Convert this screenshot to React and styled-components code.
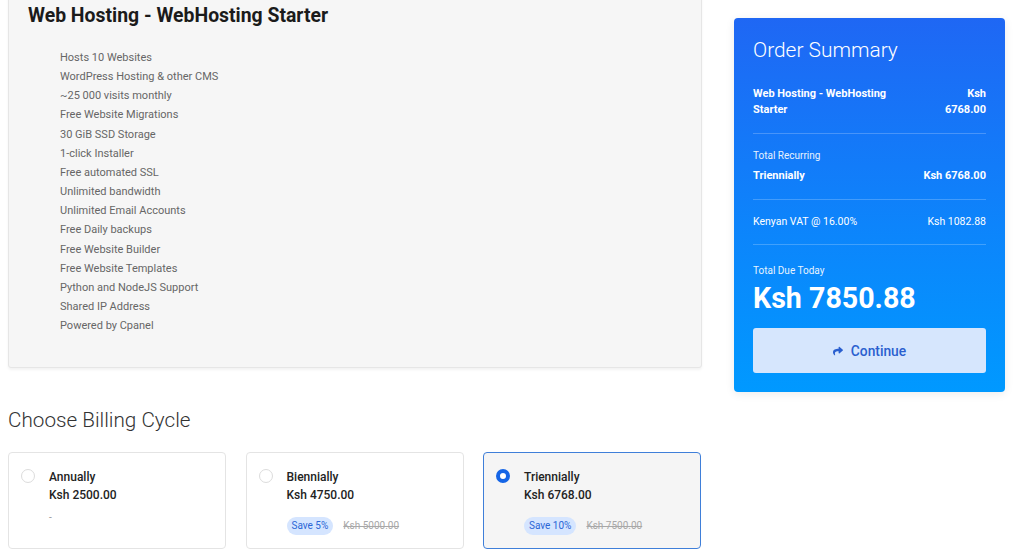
import React from 'react';
import styled, { createGlobalStyle } from 'styled-components';
import { FaShare } from 'react-icons/fa';

const GlobalStyle = createGlobalStyle`
  html, body {
    margin: 0;
    padding: 0;
    background: #ffffff;
    font-family: Roboto, "Liberation Sans", Arial, sans-serif;
    overflow: hidden;
  }
`

const Page = styled.div`
  display: grid;
  grid-template-columns: 694px 271px;
  column-gap: 32px;
  align-items: start;
  padding-left: 8px;
  margin-top: -16px;
`

const Main = styled.div`
  display: flex;
  flex-direction: column;
`

const ProductPanel = styled.div`
  background: #f6f6f6;
  border: 1px solid #e6e6e6;
  border-radius: 3px;
  box-shadow: 0 2px 3px rgba(0, 0, 0, 0.05);
  padding: 20px 20px 32px 19px;
`

const ProductTitle = styled.h2`
  margin: 0;
  font-size: 19.4px;
  line-height: 22px;
  font-weight: 700;
  color: #1b1b1b;
`

const Features = styled.ul`
  list-style: none;
  margin: 21px 0 0;
  padding: 0 0 0 32px;
`

const Feature = styled.li`
  font-size: 11px;
  line-height: 19.15px;
  color: #666666;
`

const SectionTitle = styled.h3`
  margin: 38px 0 0;
  font-size: 20.7px;
  line-height: 28px;
  font-weight: 300;
  color: #333333;
`

const Cycles = styled.div`
  display: grid;
  grid-template-columns: repeat(3, 218px);
  column-gap: 19.5px;
  margin-top: 18px;
`

const CycleCard = styled.div`
  display: flex;
  gap: 14px;
  height: 97px;
  box-sizing: border-box;
  padding: 15px 12px 0 12px;
  background: ${p => (p.$active ? '#f5f5f5' : '#ffffff')};
  border: 1px solid ${p => (p.$active ? '#3f7fd9' : '#e4e4e4')};
  border-radius: 4px;
`

const Radio = styled.span`
  flex: none;
  width: 14px;
  height: 14px;
  margin-top: 1px;
  box-sizing: border-box;
  border-radius: 50%;
  background: #ffffff;
  border: ${p => (p.$checked ? '4px solid #1565e6' : '1px solid #dcdcdc')};
`

const CycleInfo = styled.div`
  display: flex;
  flex-direction: column;
`

const CycleName = styled.div`
  font-size: 12px;
  line-height: 18px;
  font-weight: 500;
  color: #222222;
`

const CyclePrice = styled(CycleName)``

const Savings = styled.div`
  display: flex;
  align-items: center;
  gap: 10px;
  margin-top: 13px;
  font-size: 10px;
  line-height: 18px;
  color: #999999;
`

const NoSaving = styled.span`
  margin-top: -8px;
`

const SaveBadge = styled.span`
  background: #d5e5ff;
  color: #2b66d6;
  border-radius: 9px;
  padding: 0 5px;
  line-height: 18px;
`

const OldPrice = styled.span`
  text-decoration: line-through;
  color: #a8a8a8;
`

const Summary = styled.aside`
  margin-top: 34px;
  background: linear-gradient(180deg, #1f67f4 0%, #0d84fb 55%, #0099ff 100%);
  border-radius: 4px;
  box-shadow: 0 2px 10px rgba(0, 0, 0, 0.08);
  padding: 20px 19px 19px;
  color: #ffffff;
`

const SummaryTitle = styled.h3`
  margin: 0 0 24px;
  font-size: 20.9px;
  line-height: 24px;
  font-weight: 300;
`

const Row = styled.div`
  display: flex;
  justify-content: space-between;
  align-items: flex-start;
  gap: 12px;
  margin-top: ${p => p.$gap || '0'};
  font-size: ${p => (p.$small ? '10.5px' : '11px')};
  line-height: 16px;
  font-weight: ${p => (p.$bold ? 700 : 400)};
`

const RightCell = styled.span`
  text-align: right;
`

const Block = styled.div`
  padding: ${p => p.$pad || '12px 0'};
  border-bottom: ${p => (p.$last ? 'none' : '1px solid rgba(255, 255, 255, 0.22)')};
`

const Label = styled.div`
  font-size: 10px;
  line-height: 14px;
  opacity: 0.9;
`

const Total = styled.div`
  font-size: 28.6px;
  line-height: 34px;
  font-weight: 700;
  margin-top: 3px;
`

const ContinueButton = styled.button`
  display: flex;
  align-items: center;
  justify-content: center;
  gap: 8px;
  width: 100%;
  height: 45px;
  margin-top: 13px;
  border: none;
  border-radius: 3px;
  background: #d6e6fd;
  color: #2a5fcf;
  font-family: inherit;
  font-size: 13.8px;
  font-weight: 500;
  cursor: pointer;
`

const features = [
  'Hosts 10 Websites',
  'WordPress Hosting & other CMS',
  '~25 000 visits monthly',
  'Free Website Migrations',
  '30 GiB SSD Storage',
  '1-click Installer',
  'Free automated SSL',
  'Unlimited bandwidth',
  'Unlimited Email Accounts',
  'Free Daily backups',
  'Free Website Builder',
  'Free Website Templates',
  'Python and NodeJS Support',
  'Shared IP Address',
  'Powered by Cpanel',
]

const cycles = [
  { name: 'Annually', price: 'Ksh 2500.00' },
  { name: 'Biennially', price: 'Ksh 4750.00', save: 'Save 5%', old: 'Ksh 5000.00' },
  { name: 'Triennially', price: 'Ksh 6768.00', save: 'Save 10%', old: 'Ksh 7500.00', active: true },
]

const App = () => {
  return (
    <>
      <GlobalStyle />
      <Page>
        <Main>
          <ProductPanel>
            <ProductTitle>Web Hosting - WebHosting Starter</ProductTitle>
            <Features>
              {features.map((f, i) => (
                <Feature key={i}>{f}</Feature>
              ))}
            </Features>
          </ProductPanel>

          <SectionTitle>Choose Billing Cycle</SectionTitle>
          <Cycles>
            {cycles.map((c, i) => (
              <CycleCard key={i} $active={c.active}>
                <Radio $checked={c.active} />
                <CycleInfo>
                  <CycleName>{c.name}</CycleName>
                  <CyclePrice>{c.price}</CyclePrice>
                  <Savings>
                    {c.save ? (
                      <>
                        <SaveBadge>{c.save}</SaveBadge>
                        <OldPrice>{c.old}</OldPrice>
                      </>
                    ) : (
                      <NoSaving>-</NoSaving>
                    )}
                  </Savings>
                </CycleInfo>
              </CycleCard>
            ))}
          </Cycles>
        </Main>

        <Summary>
          <SummaryTitle>Order Summary</SummaryTitle>
          <Block $pad="0 0 15px">
            <Row $bold>
              <span>Web Hosting - WebHosting<br />Starter</span>
              <RightCell>Ksh<br />6768.00</RightCell>
            </Row>
          </Block>
          <Block $pad="15px 0 15px">
            <Label>Total Recurring</Label>
            <Row $bold $gap="5px">
              <span>Triennially</span>
              <RightCell>Ksh 6768.00</RightCell>
            </Row>
          </Block>
          <Block $pad="14px 0 14px">
            <Row $small>
              <span>Kenyan VAT @ 16.00%</span>
              <RightCell>Ksh 1082.88</RightCell>
            </Row>
          </Block>
          <Block $pad="19px 0 0" $last>
            <Label>Total Due Today</Label>
            <Total>Ksh 7850.88</Total>
            <ContinueButton>
              <FaShare size={10} />
              Continue
            </ContinueButton>
          </Block>
        </Summary>
      </Page>
    </>
  )
}

export default App;
